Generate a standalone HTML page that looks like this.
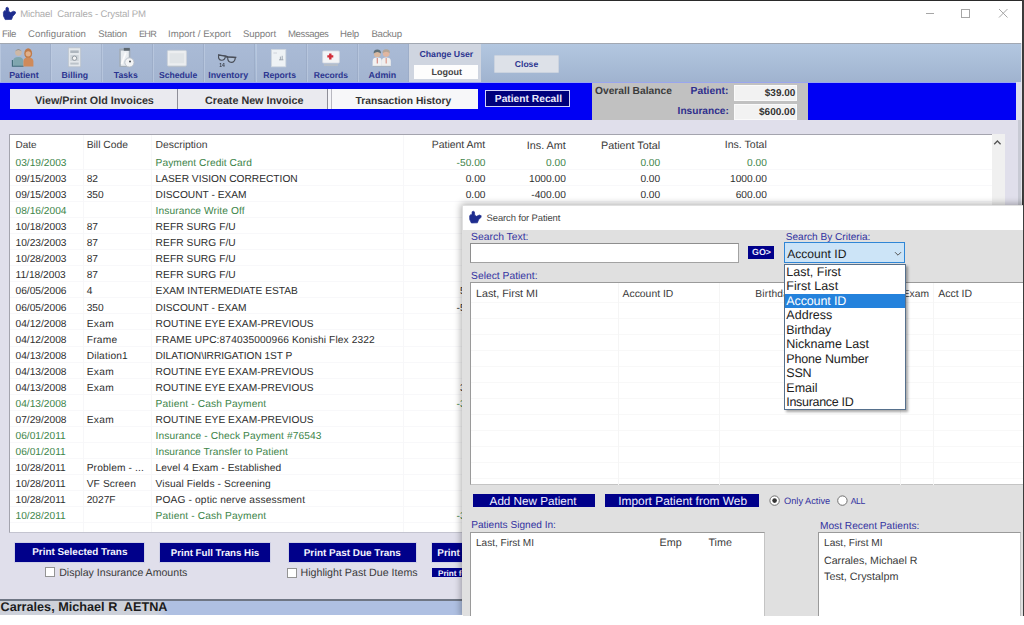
<!DOCTYPE html>
<html lang="en"><head><meta charset="utf-8"><title>Crystal PM - Search for Patient</title>
<style>
html,body{margin:0;padding:0}
body{width:1024px;height:625px;position:relative;overflow:hidden;background:#fff;font-family:"Liberation Sans",sans-serif}
div{position:absolute;box-sizing:border-box}
.t{position:absolute;white-space:pre;line-height:1;font-family:"Liberation Sans",sans-serif;text-rendering:geometricPrecision}
svg{position:absolute;overflow:visible}

</style></head>
<body>
<div class="titlebar" style="left:0;top:0;width:1024px;height:625px">
<div style="left:0px;top:0px;width:1024px;height:1.1px;background:#2a2a2a"></div>
<div style="left:1022px;top:0px;width:2px;height:617px;background:#3a3a3a"></div>
<svg style="left:2.9px;top:7.1px" width="13" height="13" viewBox="0 0 13 13"><path d="M0.4 5.2 L1.6 3.6 L2.8 4.2 L3.0 0.8 L4.2 0.2 L5.4 0.9 L5.8 4.4 L7.6 5.6 L10.6 4.2 L12.6 5.0 L12.2 6.8 L9.8 9.2 L8.6 12.4 L2.2 12.6 L0.5 9.0 Z" fill="#1d2c8e" stroke="#1d2c8e" stroke-width=".7" stroke-linejoin="round"/></svg>
<span class="t" style="color:#adadad;font-size:9.6px;top:10.11px;letter-spacing:-0.145px;left:20.2px;">Michael  Carrales - Crystal PM</span>
<svg style="left:920px;top:4px" width="100" height="20" viewBox="0 0 100 20"><g stroke="#a6a6a6" stroke-width="1" fill="none"><path d="M6 9.5 H14"/><rect x="41.5" y="5.5" width="8" height="8"/><path d="M79 5 L87.5 13.5 M87.5 5 L79 13.5"/></g></svg>
</div>
<div class="menubar" style="left:0;top:0;width:1024px;height:625px">
<span class="t" style="color:#7e7e7e;font-size:9.6px;top:30.10px;letter-spacing:-0.367px;left:2.0px;">File</span>
<span class="t" style="color:#7e7e7e;font-size:9.6px;top:30.10px;letter-spacing:0.069px;left:28.0px;">Configuration</span>
<span class="t" style="color:#7e7e7e;font-size:9.6px;top:30.10px;letter-spacing:-0.155px;left:98.2px;">Station</span>
<span class="t" style="color:#7e7e7e;font-size:9.1px;top:30.11px;letter-spacing:-0.738px;left:139.0px;">EHR</span>
<span class="t" style="color:#7e7e7e;font-size:9.6px;top:30.10px;left:168.0px;">Import / Export</span>
<span class="t" style="color:#7e7e7e;font-size:9.6px;top:30.10px;letter-spacing:-0.089px;left:243.0px;">Support</span>
<span class="t" style="color:#7e7e7e;font-size:9.6px;top:30.10px;letter-spacing:-0.407px;left:288.0px;">Messages</span>
<span class="t" style="color:#7e7e7e;font-size:9.6px;top:30.10px;letter-spacing:-0.186px;left:340.0px;">Help</span>
<span class="t" style="color:#7e7e7e;font-size:9.6px;top:30.10px;letter-spacing:-0.303px;left:371.5px;">Backup</span>
</div>
<div class="toolbar" style="left:0;top:0;width:1024px;height:625px">
<div style="left:0px;top:43px;width:1020.5px;height:38.8px;background:linear-gradient(#b3c7e0,#a0b3cf);border-top:1px solid #a2a8b2"></div>
<div style="left:1020.5px;top:42.5px;width:1.5px;height:575px;background:#e4e6ec"></div>
<div style="left:0.0px;top:43.8px;width:51.1px;height:37.8px;background:linear-gradient(#aabbd6,#a3b4d0);border-right:1px solid rgba(150,165,192,.55);border-left:1px solid rgba(190,204,226,.7);"></div>
<div style="left:51.1px;top:43.8px;width:51.1px;height:37.8px;background:linear-gradient(#b7c6dd,#adbdd7);border-right:1px solid rgba(150,165,192,.55);border-left:1px solid rgba(190,204,226,.7);"></div>
<div style="left:102.2px;top:43.8px;width:51.1px;height:37.8px;background:linear-gradient(#aabbd6,#a3b4d0);border-right:1px solid rgba(150,165,192,.55);border-left:1px solid rgba(190,204,226,.7);"></div>
<div style="left:153.3px;top:43.8px;width:51.1px;height:37.8px;background:linear-gradient(#aabbd6,#a3b4d0);border-right:1px solid rgba(150,165,192,.55);border-left:1px solid rgba(190,204,226,.7);"></div>
<div style="left:204.4px;top:43.8px;width:51.1px;height:37.8px;background:linear-gradient(#aabbd6,#a3b4d0);border-right:1px solid rgba(150,165,192,.55);border-left:1px solid rgba(190,204,226,.7);"></div>
<div style="left:255.5px;top:43.8px;width:51.1px;height:37.8px;background:linear-gradient(#aabbd6,#a3b4d0);border-right:1px solid rgba(150,165,192,.55);border-left:1px solid rgba(190,204,226,.7);"></div>
<div style="left:306.6px;top:43.8px;width:51.1px;height:37.8px;background:linear-gradient(#aabbd6,#a3b4d0);border-right:1px solid rgba(150,165,192,.55);border-left:1px solid rgba(190,204,226,.7);"></div>
<div style="left:357.7px;top:43.8px;width:51.1px;height:37.8px;background:linear-gradient(#aabbd6,#a3b4d0);border-right:1px solid rgba(150,165,192,.55);border-left:1px solid rgba(190,204,226,.7);"></div>
<span class="t" style="color:#2c3590;font-weight:bold;font-size:8.82px;top:71.11px;left:9.2px;">Patient</span>
<span class="t" style="color:#2c3590;font-weight:bold;font-size:8.74px;top:71.10px;left:61.5px;">Billing</span>
<span class="t" style="color:#2c3590;font-weight:bold;font-size:8.69px;top:71.11px;left:113.8px;">Tasks</span>
<span class="t" style="color:#2c3590;font-weight:bold;font-size:8.64px;top:71.10px;left:158.9px;">Schedule</span>
<span class="t" style="color:#2c3590;font-weight:bold;font-size:8.89px;top:71.11px;left:208.2px;">Inventory</span>
<span class="t" style="color:#2c3590;font-weight:bold;font-size:8.68px;top:71.10px;left:263.2px;">Reports</span>
<span class="t" style="color:#2c3590;font-weight:bold;font-size:8.55px;top:71.12px;left:313.8px;">Records</span>
<span class="t" style="color:#2c3590;font-weight:bold;font-size:8.9px;top:71.10px;left:368.6px;">Admin</span>
<svg style="left:0;top:43px;filter:blur(.4px)" width="410" height="39" viewBox="0 43 410 39">
<!-- Patient -->
<g>
<circle cx="18.4" cy="52.6" r="3.3" fill="#cdb8a6"/><path d="M14.9 51.6 Q18.4 46.2 21.9 51.6 Q18.4 48.6 14.9 51.6Z" fill="#8a8f92"/>
<path d="M13.2 66 V60.8 Q13.2 57 18.4 57 Q23.2 57 23.2 60.8 V66Z" fill="#7fa6ae"/>
<path d="M12.4 60 V66.2 H23.6" stroke="#3f6a78" stroke-width="1.1" fill="none"/>
<ellipse cx="28.2" cy="53.4" rx="3.9" ry="5.2" fill="#c07a48"/><circle cx="28.2" cy="53.8" r="2.6" fill="#e0b08c"/>
<path d="M23.4 66.4 V61.5 Q23.4 57.6 28.2 57.6 Q33.4 57.6 33.4 61.5 V66.4Z" fill="#cf8a5a"/>
</g>
<!-- Billing -->
<g>
<rect x="68.3" y="47.8" width="12.4" height="19" fill="#e4e8ec" stroke="#b9c1cc" stroke-width=".8"/>
<rect x="70.3" y="50.4" width="8.4" height="2.6" fill="#aeb6be"/>
<rect x="70.3" y="55" width="8.4" height="6" fill="#cdd3d8"/><circle cx="74.5" cy="58.2" r="2.2" fill="#f4f4f4" stroke="#7d8790" stroke-width=".8"/>
<rect x="70.3" y="62.6" width="8.4" height="2" fill="#bcc3ca"/>
</g>
<!-- Tasks -->
<g>
<rect x="119.2" y="48.6" width="11.2" height="18.4" rx=".8" fill="#a3adb8"/>
<rect x="120.8" y="50.6" width="8" height="15.2" fill="#e9edf0"/>
<rect x="123.8" y="47.9" width="6" height="2.8" fill="#5c666e"/>
<path d="M121.6 64 L125.8 52.6" stroke="#fbfbfb" stroke-width="1.8"/>
<circle cx="129.4" cy="62.4" r="4.6" fill="#f3f4f5" stroke="#b4bcc6" stroke-width=".9"/>
<circle cx="130" cy="61.4" r="1" fill="#4a4f56"/>
</g>
<!-- Schedule -->
<g>
<rect x="167.4" y="50.4" width="19" height="15.6" rx="1.2" fill="#eceef0" stroke="#cbd2da" stroke-width="1"/>
<rect x="169.6" y="53.2" width="14.6" height="10" fill="#e0e4e7"/>
<path d="M168 66.6 H186" stroke="#b9c1cc" stroke-width="1"/>
</g>
<!-- Inventory -->
<g fill="none" stroke="#4a4f5a" stroke-width="1.15">
<path d="M218.6 55.2 Q218 60 221.6 60.2 Q225 60.2 225.4 56.2 Z" fill="#b2c2d8"/>
<path d="M227.6 57 Q227.6 62.4 231.4 62.4 Q234.8 62.2 235.4 57.6 Z" fill="#b2c2d8"/>
<path d="M218 54.8 L226 56 L228 56.8 L236.4 57.4 M225.4 56.8 L227.6 57.4"/>
</g>
<text x="219.2" y="67.4" font-family="Liberation Sans, sans-serif" font-size="5" font-weight="bold" fill="#3a3f4a">14</text>
<!-- Reports -->
<g>
<rect x="271.4" y="49.4" width="14.4" height="17.4" fill="#eef2f5" stroke="#cfd6de" stroke-width=".8"/>
<path d="M280.4 56.6 V59.8 M282.2 55.8 V59.8 M279 59.8 H283.4" stroke="#8f99a6" stroke-width=".8"/>
<path d="M273.4 53 H277" stroke="#c6ccd4" stroke-width=".8"/>
</g>
<!-- Records -->
<g>
<rect x="322.6" y="50.9" width="16.8" height="12.2" rx="1" fill="#f3f4f6" stroke="#d0d6de" stroke-width=".8"/>
<path d="M324 65 H338" stroke="#b6bec9" stroke-width="2.2"/>
<path d="M330.3 53.4 V59.4 M327.3 56.4 H333.3" stroke="#d12c38" stroke-width="2.4"/>
</g>
<!-- Admin -->
<g>
<circle cx="377.3" cy="54" r="3.3" fill="#d8b8a0"/><path d="M373.6 53.6 Q373.4 49.6 377.3 49.6 Q381.2 49.6 381 53.6 Q377.3 50.6 373.6 53.6Z" fill="#5f7078"/>
<path d="M372.6 66 V61 Q372.6 57.6 377.3 57.6 Q381.8 57.6 381.8 61 V66Z" fill="#f2f2f2"/>
<path d="M377.3 58 V63.4" stroke="#d48a84" stroke-width="1.2"/>
<circle cx="386.2" cy="53.6" r="3.3" fill="#e0b6a0"/><path d="M382.5 53.2 Q382.3 49.2 386.2 49.2 Q390.1 49.2 389.9 53.2 Q386.2 50.2 382.5 53.2Z" fill="#b6a696"/>
<path d="M381.8 66 V61 Q381.8 57.6 386.2 57.6 Q390.8 57.6 390.8 61 V66Z" fill="#efefef"/>
<path d="M386.2 58 V63.4" stroke="#dc9a8c" stroke-width="1.2"/>
<path d="M373 66.3 H390.6" stroke="#a8b0b8" stroke-width=".8"/>
</g>
</svg>

<div style="left:409.1px;top:44.2px;width:72.3px;height:37.4px;background:#cfd5e0"></div>
<span class="t" style="color:#2c3590;font-weight:bold;font-size:8.74px;top:50.10px;left:419.4px;">Change User</span>
<div style="left:413.5px;top:65.3px;width:64.5px;height:13.7px;background:#fdfdfd"></div>
<span class="t" style="color:#444;font-weight:bold;font-size:8.97px;top:68.10px;left:431.6px;">Logout</span>
<div style="left:494px;top:54.5px;width:64.6px;height:18.3px;background:#dde1e8;border:1px solid #cbd3df;border-radius:1px"></div>
<span class="t" style="color:#2c3590;font-weight:bold;font-size:8.59px;top:60.10px;left:514.8px;">Close</span>
</div>
<div class="actionbar" style="left:0;top:0;width:1024px;height:625px">
<div style="left:0px;top:81.6px;width:1016px;height:38.8px;background:#0000f4;border-top:1px solid #9aa6ee"></div>
<div style="left:1016px;top:82px;width:4.5px;height:38.4px;background:#dcdcee"></div>
<div style="left:10px;top:89.4px;width:167.2px;height:19.2px;background:#eaeaef"></div>
<div style="left:177.2px;top:89.4px;width:1.1px;height:19.2px;background:#8e8e98"></div>
<span class="t" style="color:#333;font-weight:bold;font-size:10.78px;top:96.11px;left:35.0px;">View/Print Old Invoices</span>
<div style="left:178.3px;top:89.4px;width:148.8px;height:19.2px;background:#eaeaef"></div>
<div style="left:327.1px;top:89.4px;width:1.1px;height:19.2px;background:#8e8e98"></div>
<div style="left:328.2px;top:89.4px;width:3px;height:19.2px;background:#f4f4f8"></div>
<span class="t" style="color:#333;font-weight:bold;font-size:10.74px;top:96.11px;left:205.0px;">Create New Invoice</span>
<div style="left:331px;top:89.4px;width:146.6px;height:19.2px;background:#f7f7f9;border-left:1.5px solid #b8b8c0"></div>
<span class="t" style="color:#333;font-weight:bold;font-size:10.26px;top:97.11px;left:355.5px;">Transaction History</span>
<div style="left:485px;top:90.4px;width:85.3px;height:17px;background:#00007c;border:1.8px solid #d2d2fa"></div>
<span class="t" style="color:#ececff;font-weight:bold;font-size:10.25px;top:95.11px;left:494.8px;">Patient Recall</span>
<div style="left:592.2px;top:83px;width:216.2px;height:37.6px;background:#c1c1c1"></div>
<span class="t" style="color:#3c3c3c;font-weight:bold;font-size:10.26px;top:87.10px;left:595.0px;">Overall Balance</span>
<span class="t" style="color:#2f2f8c;font-weight:bold;font-size:10.31px;top:87.11px;left:690.6px;">Patient:</span>
<span class="t" style="color:#2f2f8c;font-weight:bold;font-size:10.14px;top:107.10px;left:677.6px;">Insurance:</span>
<div style="left:733.8px;top:84.8px;width:63.5px;height:15.8px;background:#f2f2f2;border:1px solid #fafafa"></div>
<div style="left:733.8px;top:103.8px;width:63.5px;height:16.4px;background:#f2f2f2;border:1px solid #fafafa"></div>
<span class="t" style="color:#333;font-weight:bold;font-size:9.97px;top:89.11px;left:764.8px;">$39.00</span>
<span class="t" style="color:#333;font-weight:bold;font-size:10.04px;top:108.10px;left:759.0px;">$600.00</span>
</div>
<div class="ledger" style="left:0;top:0;width:1024px;height:625px">
<div style="left:0px;top:120.4px;width:1017.5px;height:479.3px;background:#e0dfeb"></div>
<div style="left:1017.5px;top:119.7px;width:3px;height:498px;background:#c8cad4"></div>
<div style="left:8.8px;top:133.5px;width:996.7px;height:399px;background:#fff;border:1px solid #c4c4d0;border-top-color:#a4a4ae;border-left-color:#a4a4ae"></div>
<div style="left:991.6px;top:134.3px;width:13.4px;height:397px;background:#f0f0f0"></div>
<div style="left:9.8px;top:153.7px;width:981.8px;height:377.8px;background:repeating-linear-gradient(180deg,transparent 0,transparent 15.045px,#f8f8fa 15.045px,#f8f8fa 16.045px)"></div>
<div style="left:83px;top:134.5px;width:1px;height:397px;background:#f7f7f9"></div>
<div style="left:150.5px;top:134.5px;width:1px;height:397px;background:#f7f7f9"></div>
<div style="left:402.5px;top:134.5px;width:1px;height:397px;background:#f7f7f9"></div>
<svg style="left:993px;top:139px" width="9" height="7" viewBox="0 0 9 7"><path d="M1.2 5.2 L4.4 2 L7.6 5.2" stroke="#555" stroke-width="1.3" fill="none"/></svg>
<span class="t" style="color:#3a3a3a;font-size:9.99px;top:141.11px;left:15.5px;">Date</span>
<span class="t" style="color:#3a3a3a;font-size:10.32px;top:141.11px;left:86.7px;">Bill Code</span>
<span class="t" style="color:#3a3a3a;font-size:10.36px;top:141.10px;left:155.6px;">Description</span>
<span class="t" style="color:#3a3a3a;font-size:10.48px;top:141.11px;left:431.7px;">Patient Amt</span>
<span class="t" style="color:#3a3a3a;font-size:10.8px;top:141.11px;left:526.8px;">Ins. Amt</span>
<span class="t" style="color:#3a3a3a;font-size:10.79px;top:141.11px;left:601.0px;">Patient Total</span>
<span class="t" style="color:#3a3a3a;font-size:10.54px;top:140.11px;left:724.8px;">Ins. Total</span>
<span class="t" style="color:#40854a;font-size:10.2px;top:159.10px;left:15.5px;">03/19/2003</span>
<span class="t" style="color:#40854a;font-size:10.2px;top:159.10px;letter-spacing:0.061px;left:155.6px;">Payment Credit Card</span>
<span class="t" style="color:#40854a;font-size:10.2px;top:159.10px;right:538.5px;">-50.00</span>
<span class="t" style="color:#40854a;font-size:10.2px;top:159.10px;right:458.2px;">0.00</span>
<span class="t" style="color:#40854a;font-size:10.2px;top:159.10px;right:363.8px;">0.00</span>
<span class="t" style="color:#40854a;font-size:10.2px;top:159.10px;right:257.2px;">0.00</span>
<span class="t" style="color:#2e2e2e;font-size:10.2px;top:175.12px;left:15.5px;">09/15/2003</span>
<span class="t" style="color:#2e2e2e;font-size:10.2px;top:175.12px;left:86.7px;">82</span>
<span class="t" style="color:#2e2e2e;font-size:10.2px;top:175.12px;left:155.6px;">LASER VISION CORRECTION</span>
<span class="t" style="color:#2e2e2e;font-size:10.2px;top:175.12px;right:538.5px;">0.00</span>
<span class="t" style="color:#2e2e2e;font-size:10.2px;top:175.12px;right:458.2px;">1000.00</span>
<span class="t" style="color:#2e2e2e;font-size:10.2px;top:175.12px;right:363.8px;">0.00</span>
<span class="t" style="color:#2e2e2e;font-size:10.2px;top:175.12px;right:257.2px;">1000.00</span>
<span class="t" style="color:#2e2e2e;font-size:10.2px;top:191.10px;left:15.5px;">09/15/2003</span>
<span class="t" style="color:#2e2e2e;font-size:10.2px;top:191.10px;left:86.7px;">350</span>
<span class="t" style="color:#2e2e2e;font-size:10.2px;top:191.10px;left:155.6px;">DISCOUNT - EXAM</span>
<span class="t" style="color:#2e2e2e;font-size:10.2px;top:191.10px;right:538.5px;">0.00</span>
<span class="t" style="color:#2e2e2e;font-size:10.2px;top:191.10px;right:458.2px;">-400.00</span>
<span class="t" style="color:#2e2e2e;font-size:10.2px;top:191.10px;right:363.8px;">0.00</span>
<span class="t" style="color:#2e2e2e;font-size:10.2px;top:191.10px;right:257.2px;">600.00</span>
<span class="t" style="color:#40854a;font-size:10.2px;top:207.11px;left:15.5px;">08/16/2004</span>
<span class="t" style="color:#40854a;font-size:10.2px;top:207.11px;letter-spacing:0.085px;left:155.6px;">Insurance Write Off</span>
<span class="t" style="color:#40854a;font-size:10.2px;top:207.11px;right:538.5px;">0.00</span>
<span class="t" style="color:#40854a;font-size:10.2px;top:207.11px;right:458.2px;">-600.00</span>
<span class="t" style="color:#40854a;font-size:10.2px;top:207.11px;right:363.8px;">0.00</span>
<span class="t" style="color:#40854a;font-size:10.2px;top:207.11px;right:257.2px;">0.00</span>
<span class="t" style="color:#2e2e2e;font-size:10.2px;top:223.11px;left:15.5px;">10/18/2003</span>
<span class="t" style="color:#2e2e2e;font-size:10.2px;top:223.11px;left:86.7px;">87</span>
<span class="t" style="color:#2e2e2e;font-size:10.2px;top:223.11px;letter-spacing:0.074px;left:155.6px;">REFR SURG F/U</span>
<span class="t" style="color:#2e2e2e;font-size:10.2px;top:223.11px;right:538.5px;">0.00</span>
<span class="t" style="color:#2e2e2e;font-size:10.2px;top:223.11px;right:458.2px;">0.00</span>
<span class="t" style="color:#2e2e2e;font-size:10.2px;top:223.11px;right:363.8px;">0.00</span>
<span class="t" style="color:#2e2e2e;font-size:10.2px;top:223.11px;right:257.2px;">0.00</span>
<span class="t" style="color:#2e2e2e;font-size:10.2px;top:239.11px;left:15.5px;">10/23/2003</span>
<span class="t" style="color:#2e2e2e;font-size:10.2px;top:239.11px;left:86.7px;">87</span>
<span class="t" style="color:#2e2e2e;font-size:10.2px;top:239.11px;letter-spacing:0.074px;left:155.6px;">REFR SURG F/U</span>
<span class="t" style="color:#2e2e2e;font-size:10.2px;top:239.11px;right:538.5px;">0.00</span>
<span class="t" style="color:#2e2e2e;font-size:10.2px;top:239.11px;right:458.2px;">0.00</span>
<span class="t" style="color:#2e2e2e;font-size:10.2px;top:239.11px;right:363.8px;">0.00</span>
<span class="t" style="color:#2e2e2e;font-size:10.2px;top:239.11px;right:257.2px;">0.00</span>
<span class="t" style="color:#2e2e2e;font-size:10.2px;top:255.11px;left:15.5px;">10/28/2003</span>
<span class="t" style="color:#2e2e2e;font-size:10.2px;top:255.11px;left:86.7px;">87</span>
<span class="t" style="color:#2e2e2e;font-size:10.2px;top:255.11px;letter-spacing:0.074px;left:155.6px;">REFR SURG F/U</span>
<span class="t" style="color:#2e2e2e;font-size:10.2px;top:255.11px;right:538.5px;">0.00</span>
<span class="t" style="color:#2e2e2e;font-size:10.2px;top:255.11px;right:458.2px;">0.00</span>
<span class="t" style="color:#2e2e2e;font-size:10.2px;top:255.11px;right:363.8px;">0.00</span>
<span class="t" style="color:#2e2e2e;font-size:10.2px;top:255.11px;right:257.2px;">0.00</span>
<span class="t" style="color:#2e2e2e;font-size:10.2px;top:271.11px;left:15.5px;">11/18/2003</span>
<span class="t" style="color:#2e2e2e;font-size:10.2px;top:271.11px;left:86.7px;">87</span>
<span class="t" style="color:#2e2e2e;font-size:10.2px;top:271.11px;letter-spacing:0.074px;left:155.6px;">REFR SURG F/U</span>
<span class="t" style="color:#2e2e2e;font-size:10.2px;top:271.11px;right:538.5px;">0.00</span>
<span class="t" style="color:#2e2e2e;font-size:10.2px;top:271.11px;right:458.2px;">0.00</span>
<span class="t" style="color:#2e2e2e;font-size:10.2px;top:271.11px;right:363.8px;">0.00</span>
<span class="t" style="color:#2e2e2e;font-size:10.2px;top:271.11px;right:257.2px;">0.00</span>
<span class="t" style="color:#2e2e2e;font-size:10.2px;top:287.10px;left:15.5px;">06/05/2006</span>
<span class="t" style="color:#2e2e2e;font-size:10.2px;top:287.10px;left:86.7px;">4</span>
<span class="t" style="color:#2e2e2e;font-size:10.2px;top:287.10px;left:155.6px;">EXAM INTERMEDIATE ESTAB</span>
<span class="t" style="color:#2e2e2e;font-size:10.2px;top:287.10px;right:538.5px;">50.00</span>
<span class="t" style="color:#2e2e2e;font-size:10.2px;top:287.10px;right:458.2px;">0.00</span>
<span class="t" style="color:#2e2e2e;font-size:10.2px;top:287.10px;right:363.8px;">50.00</span>
<span class="t" style="color:#2e2e2e;font-size:10.2px;top:287.10px;right:257.2px;">0.00</span>
<span class="t" style="color:#2e2e2e;font-size:10.2px;top:304.12px;left:15.5px;">06/05/2006</span>
<span class="t" style="color:#2e2e2e;font-size:10.2px;top:304.12px;left:86.7px;">350</span>
<span class="t" style="color:#2e2e2e;font-size:10.2px;top:304.12px;left:155.6px;">DISCOUNT - EXAM</span>
<span class="t" style="color:#2e2e2e;font-size:10.2px;top:304.12px;right:538.5px;">-50.00</span>
<span class="t" style="color:#2e2e2e;font-size:10.2px;top:304.12px;right:458.2px;">0.00</span>
<span class="t" style="color:#2e2e2e;font-size:10.2px;top:304.12px;right:363.8px;">0.00</span>
<span class="t" style="color:#2e2e2e;font-size:10.2px;top:304.12px;right:257.2px;">0.00</span>
<span class="t" style="color:#2e2e2e;font-size:10.2px;top:320.10px;left:15.5px;">04/12/2008</span>
<span class="t" style="color:#2e2e2e;font-size:10.2px;top:320.10px;letter-spacing:0.307px;left:86.7px;">Exam</span>
<span class="t" style="color:#2e2e2e;font-size:10.2px;top:320.10px;letter-spacing:0.052px;left:155.6px;">ROUTINE EYE EXAM-PREVIOUS</span>
<span class="t" style="color:#2e2e2e;font-size:10.2px;top:320.10px;right:538.5px;">0.00</span>
<span class="t" style="color:#2e2e2e;font-size:10.2px;top:320.10px;right:458.2px;">0.00</span>
<span class="t" style="color:#2e2e2e;font-size:10.2px;top:320.10px;right:363.8px;">0.00</span>
<span class="t" style="color:#2e2e2e;font-size:10.2px;top:320.10px;right:257.2px;">0.00</span>
<span class="t" style="color:#2e2e2e;font-size:10.2px;top:336.11px;left:15.5px;">04/12/2008</span>
<span class="t" style="color:#2e2e2e;font-size:10.2px;top:336.11px;letter-spacing:0.266px;left:86.7px;">Frame</span>
<span class="t" style="color:#2e2e2e;font-size:10.2px;top:336.11px;letter-spacing:0.115px;left:155.6px;">FRAME UPC:874035000966 Konishi Flex 2322</span>
<span class="t" style="color:#2e2e2e;font-size:10.2px;top:336.11px;right:538.5px;">0.00</span>
<span class="t" style="color:#2e2e2e;font-size:10.2px;top:336.11px;right:458.2px;">0.00</span>
<span class="t" style="color:#2e2e2e;font-size:10.2px;top:336.11px;right:363.8px;">0.00</span>
<span class="t" style="color:#2e2e2e;font-size:10.2px;top:336.11px;right:257.2px;">0.00</span>
<span class="t" style="color:#2e2e2e;font-size:10.2px;top:352.11px;left:15.5px;">04/13/2008</span>
<span class="t" style="color:#2e2e2e;font-size:10.2px;top:352.11px;letter-spacing:0.179px;left:86.7px;">Dilation1</span>
<span class="t" style="color:#2e2e2e;font-size:10.2px;top:352.11px;letter-spacing:-0.086px;left:155.6px;">DILATION\IRRIGATION 1ST P</span>
<span class="t" style="color:#2e2e2e;font-size:10.2px;top:352.11px;right:538.5px;">0.00</span>
<span class="t" style="color:#2e2e2e;font-size:10.2px;top:352.11px;right:458.2px;">0.00</span>
<span class="t" style="color:#2e2e2e;font-size:10.2px;top:352.11px;right:363.8px;">0.00</span>
<span class="t" style="color:#2e2e2e;font-size:10.2px;top:352.11px;right:257.2px;">0.00</span>
<span class="t" style="color:#2e2e2e;font-size:10.2px;top:368.11px;left:15.5px;">04/13/2008</span>
<span class="t" style="color:#2e2e2e;font-size:10.2px;top:368.11px;letter-spacing:0.307px;left:86.7px;">Exam</span>
<span class="t" style="color:#2e2e2e;font-size:10.2px;top:368.11px;letter-spacing:0.052px;left:155.6px;">ROUTINE EYE EXAM-PREVIOUS</span>
<span class="t" style="color:#2e2e2e;font-size:10.2px;top:368.11px;right:538.5px;">0.00</span>
<span class="t" style="color:#2e2e2e;font-size:10.2px;top:368.11px;right:458.2px;">0.00</span>
<span class="t" style="color:#2e2e2e;font-size:10.2px;top:368.11px;right:363.8px;">0.00</span>
<span class="t" style="color:#2e2e2e;font-size:10.2px;top:368.11px;right:257.2px;">0.00</span>
<span class="t" style="color:#2e2e2e;font-size:10.2px;top:384.11px;left:15.5px;">04/13/2008</span>
<span class="t" style="color:#2e2e2e;font-size:10.2px;top:384.11px;letter-spacing:0.307px;left:86.7px;">Exam</span>
<span class="t" style="color:#2e2e2e;font-size:10.2px;top:384.11px;letter-spacing:0.052px;left:155.6px;">ROUTINE EYE EXAM-PREVIOUS</span>
<span class="t" style="color:#2e2e2e;font-size:10.2px;top:384.11px;right:538.5px;">39.00</span>
<span class="t" style="color:#2e2e2e;font-size:10.2px;top:384.11px;right:458.2px;">0.00</span>
<span class="t" style="color:#2e2e2e;font-size:10.2px;top:384.11px;right:363.8px;">39.00</span>
<span class="t" style="color:#2e2e2e;font-size:10.2px;top:384.11px;right:257.2px;">0.00</span>
<span class="t" style="color:#40854a;font-size:10.2px;top:400.11px;left:15.5px;">04/13/2008</span>
<span class="t" style="color:#40854a;font-size:10.2px;top:400.11px;letter-spacing:0.140px;left:155.6px;">Patient - Cash Payment</span>
<span class="t" style="color:#40854a;font-size:10.2px;top:400.11px;right:538.5px;">-39.00</span>
<span class="t" style="color:#40854a;font-size:10.2px;top:400.11px;right:458.2px;">0.00</span>
<span class="t" style="color:#40854a;font-size:10.2px;top:400.11px;right:363.8px;">0.00</span>
<span class="t" style="color:#40854a;font-size:10.2px;top:400.11px;right:257.2px;">0.00</span>
<span class="t" style="color:#2e2e2e;font-size:10.2px;top:416.10px;left:15.5px;">07/29/2008</span>
<span class="t" style="color:#2e2e2e;font-size:10.2px;top:416.10px;letter-spacing:0.307px;left:86.7px;">Exam</span>
<span class="t" style="color:#2e2e2e;font-size:10.2px;top:416.10px;letter-spacing:0.052px;left:155.6px;">ROUTINE EYE EXAM-PREVIOUS</span>
<span class="t" style="color:#2e2e2e;font-size:10.2px;top:416.10px;right:538.5px;">0.00</span>
<span class="t" style="color:#2e2e2e;font-size:10.2px;top:416.10px;right:458.2px;">0.00</span>
<span class="t" style="color:#2e2e2e;font-size:10.2px;top:416.10px;right:363.8px;">0.00</span>
<span class="t" style="color:#2e2e2e;font-size:10.2px;top:416.10px;right:257.2px;">0.00</span>
<span class="t" style="color:#40854a;font-size:10.2px;top:432.10px;left:15.5px;">06/01/2011</span>
<span class="t" style="color:#40854a;font-size:10.2px;top:432.10px;letter-spacing:0.108px;left:155.6px;">Insurance - Check Payment #76543</span>
<span class="t" style="color:#40854a;font-size:10.2px;top:432.10px;right:538.5px;">0.00</span>
<span class="t" style="color:#40854a;font-size:10.2px;top:432.10px;right:458.2px;">0.00</span>
<span class="t" style="color:#40854a;font-size:10.2px;top:432.10px;right:363.8px;">0.00</span>
<span class="t" style="color:#40854a;font-size:10.2px;top:432.10px;right:257.2px;">0.00</span>
<span class="t" style="color:#40854a;font-size:10.2px;top:448.10px;left:15.5px;">06/01/2011</span>
<span class="t" style="color:#40854a;font-size:10.2px;top:448.10px;letter-spacing:0.049px;left:155.6px;">Insurance Transfer to Patient</span>
<span class="t" style="color:#40854a;font-size:10.2px;top:448.10px;right:538.5px;">0.00</span>
<span class="t" style="color:#40854a;font-size:10.2px;top:448.10px;right:458.2px;">0.00</span>
<span class="t" style="color:#40854a;font-size:10.2px;top:448.10px;right:363.8px;">0.00</span>
<span class="t" style="color:#40854a;font-size:10.2px;top:448.10px;right:257.2px;">0.00</span>
<span class="t" style="color:#2e2e2e;font-size:10.2px;top:464.11px;left:15.5px;">10/28/2011</span>
<span class="t" style="color:#2e2e2e;font-size:10.2px;top:464.11px;letter-spacing:0.135px;left:86.7px;">Problem - ...</span>
<span class="t" style="color:#2e2e2e;font-size:10.2px;top:464.11px;letter-spacing:0.089px;left:155.6px;">Level 4 Exam - Established</span>
<span class="t" style="color:#2e2e2e;font-size:10.2px;top:464.11px;right:538.5px;">0.00</span>
<span class="t" style="color:#2e2e2e;font-size:10.2px;top:464.11px;right:458.2px;">0.00</span>
<span class="t" style="color:#2e2e2e;font-size:10.2px;top:464.11px;right:363.8px;">0.00</span>
<span class="t" style="color:#2e2e2e;font-size:10.2px;top:464.11px;right:257.2px;">0.00</span>
<span class="t" style="color:#2e2e2e;font-size:10.2px;top:480.11px;left:15.5px;">10/28/2011</span>
<span class="t" style="color:#2e2e2e;font-size:10.2px;top:480.11px;letter-spacing:0.124px;left:86.7px;">VF Screen</span>
<span class="t" style="color:#2e2e2e;font-size:10.2px;top:480.11px;letter-spacing:0.111px;left:155.6px;">Visual Fields - Screening</span>
<span class="t" style="color:#2e2e2e;font-size:10.2px;top:480.11px;right:538.5px;">0.00</span>
<span class="t" style="color:#2e2e2e;font-size:10.2px;top:480.11px;right:458.2px;">0.00</span>
<span class="t" style="color:#2e2e2e;font-size:10.2px;top:480.11px;right:363.8px;">0.00</span>
<span class="t" style="color:#2e2e2e;font-size:10.2px;top:480.11px;right:257.2px;">0.00</span>
<span class="t" style="color:#2e2e2e;font-size:10.2px;top:496.11px;left:15.5px;">10/28/2011</span>
<span class="t" style="color:#2e2e2e;font-size:10.2px;top:496.11px;left:86.7px;">2027F</span>
<span class="t" style="color:#2e2e2e;font-size:10.2px;top:496.11px;letter-spacing:0.138px;left:155.6px;">POAG - optic nerve assessment</span>
<span class="t" style="color:#2e2e2e;font-size:10.2px;top:496.11px;right:538.5px;">0.00</span>
<span class="t" style="color:#2e2e2e;font-size:10.2px;top:496.11px;right:458.2px;">0.00</span>
<span class="t" style="color:#2e2e2e;font-size:10.2px;top:496.11px;right:363.8px;">0.00</span>
<span class="t" style="color:#2e2e2e;font-size:10.2px;top:496.11px;right:257.2px;">0.00</span>
<span class="t" style="color:#40854a;font-size:10.2px;top:512.11px;left:15.5px;">10/28/2011</span>
<span class="t" style="color:#40854a;font-size:10.2px;top:512.11px;letter-spacing:0.140px;left:155.6px;">Patient - Cash Payment</span>
<span class="t" style="color:#40854a;font-size:10.2px;top:512.11px;right:538.5px;">-39.00</span>
<span class="t" style="color:#40854a;font-size:10.2px;top:512.11px;right:458.2px;">0.00</span>
<span class="t" style="color:#40854a;font-size:10.2px;top:512.11px;right:363.8px;">0.00</span>
<span class="t" style="color:#40854a;font-size:10.2px;top:512.11px;right:257.2px;">0.00</span>
</div>
<div class="ledger-actions" style="left:0;top:0;width:1024px;height:625px">
<div style="left:14.6px;top:543px;width:129.6px;height:18.5px;background:#00008a;box-shadow:0 0 0 1px #cfd0e6"></div>
<span class="t" style="color:#f4f4ff;font-weight:bold;font-size:9.91px;top:548.11px;left:32.2px;">Print Selected Trans</span>
<div style="left:159.7px;top:543.4px;width:110.3px;height:18.6px;background:#00008a;box-shadow:0 0 0 1px #cfd0e6"></div>
<span class="t" style="color:#f4f4ff;font-weight:bold;font-size:9.71px;top:549.11px;left:170.8px;">Print Full Trans His</span>
<div style="left:289px;top:543.2px;width:127px;height:18.8px;background:#00008a;box-shadow:0 0 0 1px #cfd0e6"></div>
<span class="t" style="color:#f4f4ff;font-weight:bold;font-size:9.95px;top:549.10px;left:303.7px;">Print Past Due Trans</span>
<div style="left:431.9px;top:543.2px;width:110px;height:18.8px;background:#00008a;box-shadow:0 0 0 1px #cfd0e6"></div>
<span class="t" style="color:#f4f4ff;font-weight:bold;font-size:9.9px;top:549.11px;left:437.3px;">Print Statement</span>
<div style="left:431.9px;top:568.3px;width:110px;height:9.1px;background:#00008a"></div>
<span class="t" style="color:#f4f4ff;font-weight:bold;font-size:8.1px;top:570.11px;left:438.0px;">Print for Insurance</span>
<div style="left:45.4px;top:566.9px;width:9.8px;height:9.8px;background:#fff;border:1px solid #949494"></div>
<span class="t" style="color:#3a3a3a;font-size:10.59px;top:568.10px;left:59.2px;">Display Insurance Amounts</span>
<div style="left:287.2px;top:567.6px;width:10.2px;height:10.2px;background:#fff;border:1px solid #949494"></div>
<span class="t" style="color:#3a3a3a;font-size:10.65px;top:568.10px;left:300.5px;">Highlight Past Due Items</span>
</div>
<div class="statusbar" style="left:0;top:0;width:1024px;height:625px">
<div style="left:0px;top:599px;width:1017.5px;height:1.5px;background:#6f7684"></div>
<div style="left:0px;top:600.5px;width:1017.5px;height:14.4px;background:#afc0e2"></div>
<div style="left:0px;top:600.5px;width:169px;height:14.4px;background:linear-gradient(90deg,#cdd1da 92%,#afc0e2)"></div>
<span class="t" style="color:#1c1c1c;font-weight:bold;font-size:12.67px;top:601.11px;left:0.5px;">Carrales, Michael R  AETNA</span>
</div>
<div class="dialog-search-patient" style="left:0;top:0;width:1024px;height:625px">
<div style="left:462.2px;top:204.8px;width:570px;height:411.2px;background:#e0e0e0;box-shadow:0 0 7px 1px rgba(0,0,0,.33)"></div>
<div style="left:463px;top:205.6px;width:570px;height:24.6px;background:#fff"></div>
<svg style="left:469.3px;top:211.2px" width="12.9" height="12.4" viewBox="0 0 13 13"><path d="M0.4 5.2 L1.6 3.6 L2.8 4.2 L3.0 0.8 L4.2 0.2 L5.4 0.9 L5.8 4.4 L7.6 5.6 L10.6 4.2 L12.6 5.0 L12.2 6.8 L9.8 9.2 L8.6 12.4 L2.2 12.6 L0.5 9.0 Z" fill="#1d2c8e" stroke="#1d2c8e" stroke-width=".7" stroke-linejoin="round"/></svg>
<span class="t" style="color:#444;font-size:9.4px;top:213.11px;letter-spacing:-0.075px;left:486.6px;">Search for Patient</span>
<span class="t" style="color:#3333a0;font-size:10.36px;top:233.10px;left:471.1px;">Search Text:</span>
<div style="left:469.6px;top:242.5px;width:269px;height:20.6px;background:#fff;border:1.5px solid #a2a2a2;border-top-color:#8e8e8e;border-left-color:#8e8e8e"></div>
<div style="left:747.7px;top:245.8px;width:26.4px;height:12.9px;background:#00008a"></div>
<span class="t" style="color:#e8e8ff;font-weight:bold;font-size:8.88px;top:248.10px;left:752.0px;">GO&gt;</span>
<span class="t" style="color:#3333a0;font-size:10.09px;top:233.11px;left:785.8px;">Search By Criteria:</span>
<div style="left:783.5px;top:242.2px;width:121.7px;height:21.2px;background:#cce4f7;border:1px solid #2f86d6"></div>
<span class="t" style="color:#1a1a1a;font-size:12.12px;top:248.11px;left:787.2px;">Account ID</span>
<svg style="left:894px;top:250.5px" width="8" height="6" viewBox="0 0 8 6"><path d="M1 1.2 L4 4.2 L7 1.2" stroke="#555" stroke-width="1" fill="none"/></svg>
<span class="t" style="color:#3333a0;font-size:10.3px;top:272.11px;left:471.1px;">Select Patient:</span>
<div style="left:469.6px;top:281.5px;width:560px;height:203.8px;background:#fff;border:1px solid #c4c4c4;border-top-color:#9a9a9a;border-left-color:#9a9a9a"></div>
<div style="left:470.6px;top:286.7px;width:553px;height:197.5px;background:repeating-linear-gradient(180deg,transparent 0,transparent 15px,#f8f8f8 15px,#f8f8f8 16px)"></div>
<div style="left:617.6px;top:282.5px;width:1px;height:202px;background:#f5f5f5"></div>
<div style="left:719px;top:282.5px;width:1px;height:202px;background:#f5f5f5"></div>
<div style="left:900px;top:282.5px;width:1px;height:202px;background:#f5f5f5"></div>
<div style="left:933px;top:282.5px;width:1px;height:202px;background:#f5f5f5"></div>
<span class="t" style="color:#3a3a3a;font-size:10.73px;top:289.11px;left:476.0px;">Last, First MI</span>
<span class="t" style="color:#3a3a3a;font-size:10.37px;top:290.12px;left:622.6px;">Account ID</span>
<span class="t" style="color:#3a3a3a;font-size:10.25px;top:290.11px;letter-spacing:0.200px;left:755.3px;">Birthday</span>
<span class="t" style="color:#3a3a3a;font-size:10.25px;top:290.11px;right:95.0px;">Last Exam</span>
<span class="t" style="color:#3a3a3a;font-size:10.49px;top:290.11px;left:938.2px;">Acct ID</span>
<div style="left:472.6px;top:494.3px;width:122.3px;height:13px;background:#00008a"></div>
<span class="t" style="color:#f0f0ff;font-size:11.68px;top:496.10px;left:489.6px;">Add New Patient</span>
<div style="left:605.3px;top:494.3px;width:154px;height:13px;background:#00008a"></div>
<span class="t" style="color:#f0f0ff;font-size:11.92px;top:496.11px;left:618.2px;">Import Patient from Web</span>
<svg style="left:769px;top:495px" width="80" height="12" viewBox="0 0 80 12"><circle cx="5.6" cy="5.6" r="4.7" fill="#fff" stroke="#707070" stroke-width="1"/><circle cx="5.6" cy="5.6" r="2.3" fill="#333"/><circle cx="73.4" cy="5.6" r="4.7" fill="#fff" stroke="#707070" stroke-width="1"/></svg>
<span class="t" style="color:#3333a0;font-size:9.26px;top:497.10px;left:784.0px;">Only Active</span>
<span class="t" style="color:#3333a0;font-size:8.6px;top:497.10px;letter-spacing:-0.368px;left:850.7px;">ALL</span>
<span class="t" style="color:#3333a0;font-size:10.1px;top:521.11px;left:471.2px;">Patients Signed In:</span>
<span class="t" style="color:#3333a0;font-size:10.16px;top:522.11px;left:820.0px;">Most Recent Patients:</span>
<div style="left:469.6px;top:531.8px;width:295.4px;height:90px;background:#fff;border:1px solid #c4c4c4;border-top-color:#9a9a9a;border-left-color:#9a9a9a"></div>
<span class="t" style="color:#3a3a3a;font-size:10.04px;top:539.11px;left:476.0px;">Last, First MI</span>
<span class="t" style="color:#3a3a3a;font-size:10.75px;top:538.10px;left:659.5px;">Emp</span>
<span class="t" style="color:#3a3a3a;font-size:10.75px;top:538.10px;left:708.4px;">Time</span>
<div style="left:817.8px;top:531.8px;width:203.4px;height:90px;background:#fff;border:1px solid #c4c4c4;border-top-color:#9a9a9a;border-left-color:#9a9a9a"></div>
<span class="t" style="color:#3a3a3a;font-size:10.14px;top:539.11px;left:824.0px;">Last, First MI</span>
<span class="t" style="color:#3a3a3a;font-size:10.65px;top:556.11px;left:824.0px;">Carrales, Michael R</span>
<span class="t" style="color:#3a3a3a;font-size:10.8px;top:572.11px;left:824.0px;">Test, Crystalpm</span>
</div>
<div class="criteria-dropdown" style="left:0;top:0;width:1024px;height:625px">
<div style="left:783.5px;top:264.3px;width:122px;height:145.6px;background:#fff;border:1px solid #56708c;box-shadow:1.5px 1.5px 2.5px rgba(0,0,0,.35)"></div>
<span class="t" style="color:#222;font-size:12.5px;top:266.11px;letter-spacing:-0.016px;left:786.3px;">Last, First</span>
<span class="t" style="color:#222;font-size:12.5px;top:280.11px;letter-spacing:0.050px;left:786.3px;">First Last</span>
<div style="left:784.5px;top:293.6px;width:120px;height:14px;background:#2482dc"></div>
<span class="t" style="color:#fff;font-size:12.5px;top:295.11px;letter-spacing:-0.124px;left:786.3px;">Account ID</span>
<span class="t" style="color:#222;font-size:12.5px;top:309.10px;letter-spacing:0.035px;left:786.3px;">Address</span>
<span class="t" style="color:#222;font-size:12.5px;top:324.10px;letter-spacing:-0.132px;left:786.3px;">Birthday</span>
<span class="t" style="color:#222;font-size:12.5px;top:338.11px;letter-spacing:-0.006px;left:786.3px;">Nickname Last</span>
<span class="t" style="color:#222;font-size:12.5px;top:353.11px;letter-spacing:-0.156px;left:786.3px;">Phone Number</span>
<span class="t" style="color:#222;font-size:12.5px;top:367.11px;letter-spacing:-0.234px;left:786.3px;">SSN</span>
<span class="t" style="color:#222;font-size:12.5px;top:382.10px;letter-spacing:0.008px;left:786.3px;">Email</span>
<span class="t" style="color:#222;font-size:12.5px;top:396.10px;letter-spacing:-0.306px;left:786.3px;">Insurance ID</span>
<div style="left:1022.8px;top:0px;width:1.2px;height:617px;background:#3c3c3c"></div>
</div>
<div class="page-edge" style="left:0;top:0;width:1024px;height:625px">
<div style="left:0px;top:616px;width:1024px;height:9px;background:#fff"></div>
<div style="left:0px;top:614.9px;width:462.5px;height:11px;background:#fff"></div>
</div>
</body></html>
